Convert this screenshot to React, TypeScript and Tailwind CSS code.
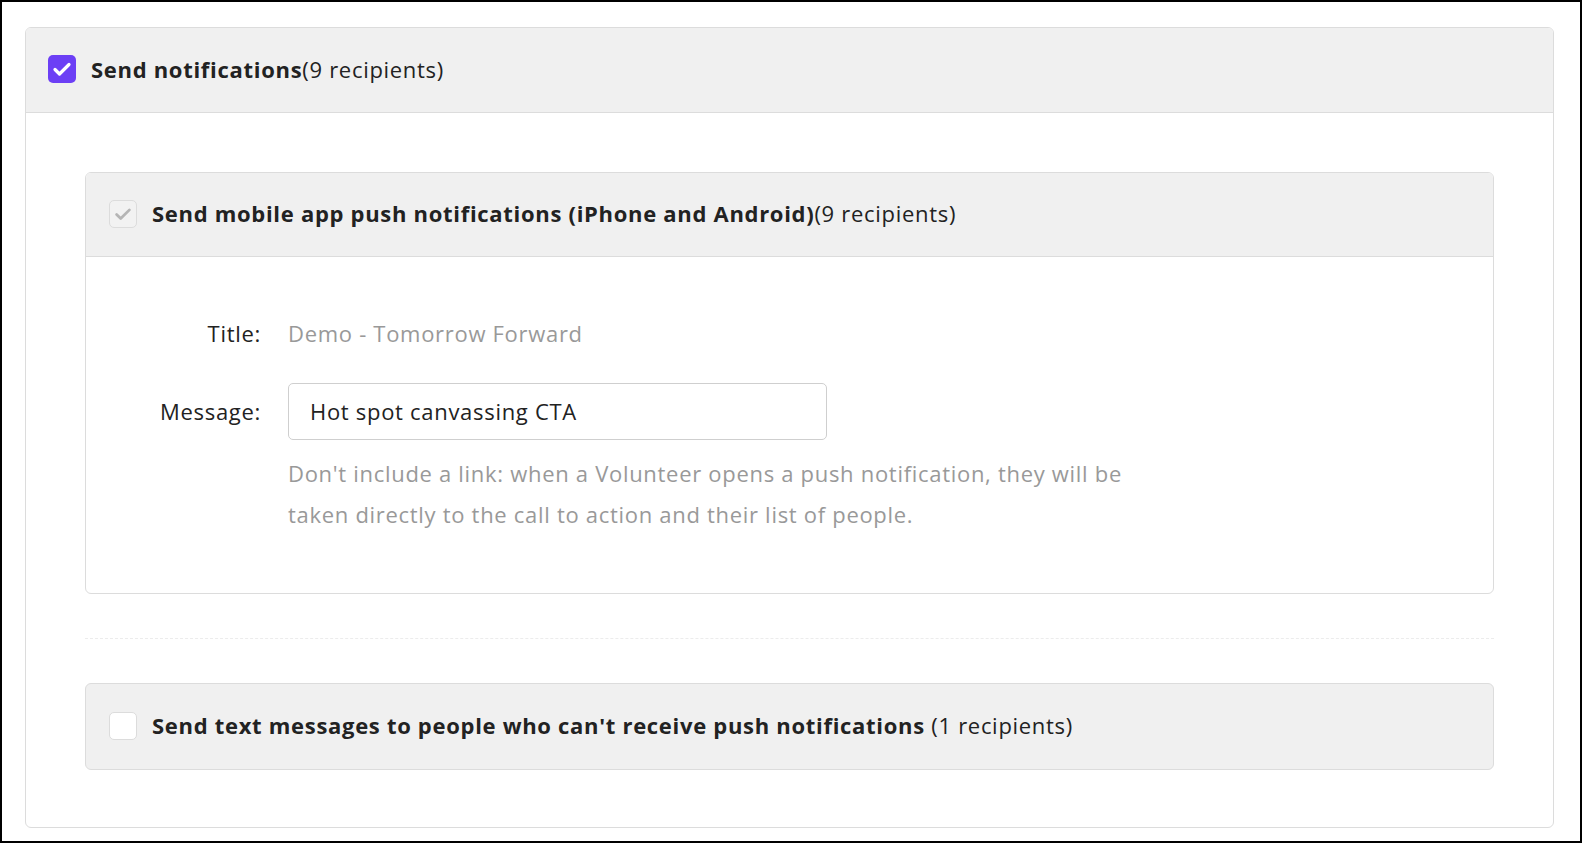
import React from "react";

function CheckBox({ state }: { state: "on" | "disabled" | "off" }) {
  if (state === "on") {
    return (
      <span className="flex h-[28px] w-[28px] flex-shrink-0 items-center justify-center rounded-[5px] bg-[#6c3ff5]">
        <svg className="h-[24px] w-[24px] text-white" fill="none" stroke="currentColor" viewBox="0 0 24 24" aria-hidden="true">
          <path strokeWidth={3.2} strokeLinecap="round" strokeLinejoin="round" d="M5 12.5l4.5 4.5L19 7.5" />
        </svg>
      </span>
    );
  }
  return (
    <span
      className={`flex h-[28px] w-[28px] flex-shrink-0 items-center justify-center rounded-[5px] border border-[#dcdcdc] ${
        state === "disabled" ? "bg-[#f2f2f2]" : "bg-white"
      }`}
    >
      {state === "disabled" && (
        <svg className="h-[22px] w-[22px] text-[#b5b5b5]" fill="none" stroke="currentColor" viewBox="0 0 24 24" aria-hidden="true">
          <path strokeWidth={3} strokeLinecap="round" strokeLinejoin="round" d="M5 12.5l4.5 4.5L19 7.5" />
        </svg>
      )}
    </span>
  );
}

export default function App() {
  return (
    <div
      className="h-[844px] w-[1584px] bg-white text-[22px] tracking-[0.7px] text-[#222]"
      style={{ fontFamily: "'Open Sans', 'Noto Sans', sans-serif" }}
    >
      <div className="h-[843px] w-[1582px] border-2 border-black pl-[23px] pr-[26px] pt-[25px]">
        <section className="overflow-hidden rounded-[6px] border border-[#dcdcdc] bg-white">
          <header className="flex h-[85px] items-center gap-[15px] border-b border-[#dcdcdc] bg-[#f0f0f0] px-[22px] pb-[2px]">
            <CheckBox state="on" />
            <span>
              <span className="font-bold">Send notifications</span>(9 recipients)
            </span>
          </header>

          <div className="px-[59px] pt-[59px] pb-[57px]">
            <div className="overflow-hidden rounded-[6px] border border-[#dcdcdc]">
              <div className="flex h-[84px] items-center gap-[15px] border-b border-[#dcdcdc] bg-[#f0f0f0] px-[23px] pb-[2px]">
                <CheckBox state="disabled" />
                <span>
                  <span className="font-bold">Send mobile app push notifications (iPhone and Android)</span>(9 recipients)
                </span>
              </div>
              <div className="grid grid-cols-[175px_1fr] gap-x-[27px] pt-[56px] pb-[58px]">
                <div className="text-right leading-[41px]">Title:</div>
                <div className="leading-[41px] text-[#999]">Demo - Tomorrow Forward</div>

                <div className="mt-[29px] flex h-[57px] items-center justify-end">Message:</div>
                <div className="mt-[29px]">
                  <div className="flex h-[57px] w-[539px] items-center rounded-[5px] border border-[#cfcfcf] px-[21px]">
                    Hot spot canvassing CTA
                  </div>
                  <p className="mt-[13px] max-w-[880px] leading-[41px] text-[#999]">
                    Don't include a link: when a Volunteer opens a push notification, they will be taken directly to the call to action and their list of people.
                  </p>
                </div>
              </div>
            </div>

            <div className="my-[44px] border-t border-dashed border-[#ececec]" />

            <div className="flex h-[87px] items-center gap-[15px] rounded-[6px] border border-[#dcdcdc] bg-[#f0f0f0] px-[23px] pb-[2px]">
              <CheckBox state="off" />
              <span>
                <span className="font-bold">Send text messages to people who can't receive push notifications</span> (1 recipients)
              </span>
            </div>
          </div>
        </section>
      </div>
    </div>
  );
}
